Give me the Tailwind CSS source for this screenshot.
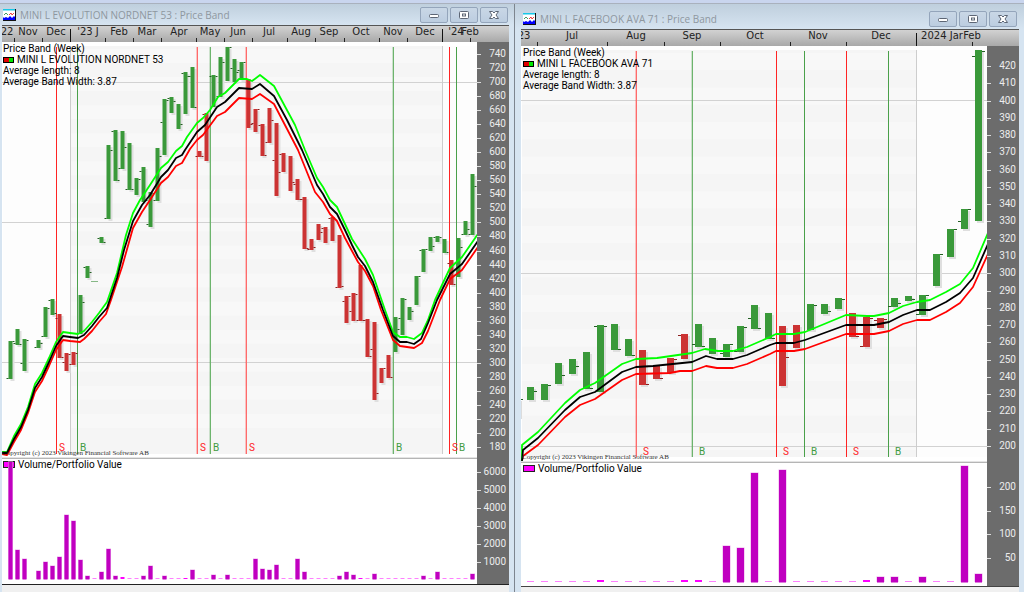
<!DOCTYPE html>
<html lang="en">
<head>
<meta charset="utf-8">
<title>Price Band</title>
<script src="https://cdn.jsdelivr.net/npm/@tailwindcss/browser@4"></script>
</head>
<body class="flex min-h-screen flex-col bg-[#d6e4f1] font-[Roboto,sans-serif] text-[10px] text-black">
<div class="h-1 border-b border-[#a9b1bd] bg-[#c9d5ee]"></div>
<main class="grid flex-1 grid-cols-[515fr_509fr]">

  <section class="flex min-w-0 flex-col border-r border-[#7d858f] bg-[#d6e4f1] pr-[5px] pl-[2px]" data-chart="left">
    <header class="-mr-[5px] -ml-[2px] flex h-[21px] items-center bg-linear-to-b from-[#bfcfdd] to-[#d6e4f1] pr-[6px] pl-[3px]">
      <svg class="h-3 w-[13px] shrink-0" viewBox="0 0 13 12"><rect width="13" height="12" fill="#111"/><rect x="0" y="0" width="12" height="11" fill="#fff"/><rect width="12" height="1.500" fill="#18c8e8"/><path d="M1 6l2-2 2 2" fill="none" stroke="#15803d" stroke-width=".8"/><path d="M6 6l2-2 1 2 2-2" fill="none" stroke="#e11" stroke-width=".8"/><path d="M0 8l1 1 2-1 2 1 2-2 2 2 2-2 1 1v3H0z" fill="#00f"/></svg>
      <h1 class="ml-1 flex-1 truncate font-['Open_Sans',sans-serif] text-[10px] leading-4 text-[#8e979f]">MINI L EVOLUTION NORDNET 53 : Price Band</h1>
      <div class="flex gap-[2px]" data-buttons></div>
    </header>
    <div class="relative h-[17px] overflow-hidden border-t border-[#555] bg-linear-to-b from-[#d2d2d2] to-[#a9a9a9] font-['DejaVu_Sans',sans-serif] text-[10px] leading-3 text-[#222]" data-months></div>
    <div class="flex">
      <div class="min-w-0 flex-1 bg-white">
        <div class="relative h-[415px] overflow-hidden" data-price>
          <div class="absolute top-0 left-[1px] pt-px leading-[11px] whitespace-nowrap">
            <p>Price Band (Week)</p>
            <p class="flex items-center gap-[3px]"><span class="flex h-[6px] w-[11px] border border-black"><i class="flex-1 bg-[#e00000]"></i><i class="flex-1 bg-[#00e800]"></i></span>MINI L EVOLUTION NORDNET 53</p>
            <p>Average length: 8</p>
            <p>Average Band Width: 3.87</p>
          </div>
          <p class="absolute bottom-0 left-0 font-['Liberation_Serif',serif] text-[7px] leading-2 whitespace-nowrap text-[#333]">Copyright (c) 2023 Vikingen Financial Software AB</p>
        </div>
        <div class="h-[2px] border-t border-[#e4e4e4] bg-[#b5b5b5]"></div>
        <div class="relative h-[125px] overflow-hidden" data-volume>
          <p class="absolute top-0 left-[1px] flex items-center gap-[3px] leading-[11px] whitespace-nowrap"><span class="h-[7px] w-3 border border-[#222] bg-[#f0f]"></span>Volume/Portfolio Value</p>
        </div>
      </div>
      <aside class="relative w-8 bg-[#6c6c6c] leading-3 text-[#ececec]" data-axis></aside>
    </div>
    <footer class="flex-1 border-t border-[#222] bg-[#f0f0f0]"></footer>
  </section>

  <section class="flex min-w-0 flex-col bg-[#d6e4f1] pr-[5px] pl-[6px]" data-chart="right">
    <header class="-mr-[5px] -ml-[6px] flex h-[25px] items-center bg-linear-to-b from-[#bfcfdd] to-[#d6e4f1] pt-[4px] pr-[7px] pl-2">
      <svg class="h-3 w-[13px] shrink-0" viewBox="0 0 13 12"><rect width="13" height="12" fill="#111"/><rect x="0" y="0" width="12" height="11" fill="#fff"/><rect width="12" height="1.500" fill="#18c8e8"/><path d="M1 6l2-2 2 2" fill="none" stroke="#15803d" stroke-width=".8"/><path d="M6 6l2-2 1 2 2-2" fill="none" stroke="#e11" stroke-width=".8"/><path d="M0 8l1 1 2-1 2 1 2-2 2 2 2-2 1 1v3H0z" fill="#00f"/></svg>
      <h1 class="ml-1 flex-1 truncate font-['Open_Sans',sans-serif] text-[10px] leading-4 text-[#8e979f]">MINI L FACEBOOK AVA 71 : Price Band</h1>
      <div class="flex gap-[2px]" data-buttons></div>
    </header>
    <div class="relative h-[17px] overflow-hidden border-t border-[#555] bg-linear-to-b from-[#d2d2d2] to-[#a9a9a9] font-['DejaVu_Sans',sans-serif] text-[10px] leading-3 text-[#222]" data-months></div>
    <div class="flex">
      <div class="min-w-0 flex-1 bg-white">
        <div class="relative h-[415px] overflow-hidden" data-price>
          <div class="absolute top-0 left-[2px] pt-px leading-[11px] whitespace-nowrap">
            <p>Price Band (Week)</p>
            <p class="flex items-center gap-[3px]"><span class="flex h-[6px] w-[11px] border border-black"><i class="flex-1 bg-[#e00000]"></i><i class="flex-1 bg-[#00e800]"></i></span>MINI L FACEBOOK AVA 71</p>
            <p>Average length: 8</p>
            <p>Average Band Width: 3.87</p>
          </div>
          <p class="absolute bottom-0 left-px font-['Liberation_Serif',serif] text-[7px] leading-2 whitespace-nowrap text-[#333]">Copyright (c) 2023 Vikingen Financial Software AB</p>
        </div>
        <div class="h-[2px] border-t border-[#e4e4e4] bg-[#b5b5b5]"></div>
        <div class="relative h-[123px] overflow-hidden" data-volume>
          <p class="absolute top-0 left-[2px] flex items-center gap-[3px] leading-[11px] whitespace-nowrap"><span class="h-[7px] w-3 border border-[#222] bg-[#f0f]"></span>Volume/Portfolio Value</p>
        </div>
      </div>
      <aside class="relative w-8 bg-[#6c6c6c] leading-3 text-[#ececec]" data-axis></aside>
    </div>
    <footer class="flex-1 border-t border-[#444] bg-[#f0f0f0]"></footer>
  </section>
</main>

<script>
// Bars: [slot, high, low, open tick, close tick, falling]; 0 leaves a tick out.
const charts = {
  left: {
    x0: 2, w: 475, y0: 42, h: 415, vy0: 459, vh: 125, first: 10.5, step: 7, bw: 4, tick: 2, base: 579.5,
    yFrom: 47, yTo: 454, years: [70.5, 442.5], grid: [82, 222, 362],
    months: [['22', 7], ['Nov', 28], ['Dec', 56], ["'23 J", 88], ['Feb', 119], ['Mar', 147], ['Apr', 179], ['May', 210], ['Jun', 238], ['Jul', 269], ['Aug', 301], ['Sep', 329], ['Oct', 361], ['Nov', 393], ['Dec', 425], ["'24", 456], ['Feb', 470]],
    marks: [14, 42, 105, 133, 161, 196, 224, 252, 287, 315, 344, 379, 407, 470], tall: [70, 442],
    signals: [['S', 56.5], ['B', 77.5], ['S', 197, 1], ['B', 210.5, 1], ['S', 246, 1], ['B', 393.5, 1], ['S', 449.5], ['B', 456.5]],
    scale: [740, 180, 20, 54, 447], vscale: [6000, 1000, 1000, 472, 562],
    bars: [[0,341,379,379,341],[1,329,345,343,344],[2,339,371,363,340],[4,340,348,348,343],[5,307,337,337,308],[6,299,315,300,313],[7,314,358,318,357,1],[8,353,371,362,354,1],[9,352,365,364,353,1],[10,295,334,333,302],[11,266,278,267,272],[13,237,243,238,242],[14,145,219,219,150],[15,130,181,131,180],[16,131,169,168,147],[17,143,190,190,190],[18,178,195,0,179],[19,167,202,171,200],[20,192,227,224,193],[21,148,201,201,156],[22,99,155,122,100],[23,97,113,98,101],[24,104,129,0,124],[25,72,114,73,76],[26,67,108,76,108],[27,151,157,156,156,1],[28,113,161,114,0,1],[29,75,107,76,76],[30,57,97,97,62],[31,47,81,0,47],[32,59,82,68,72],[33,62,80,70,62],[34,79,128,0,124,1],[35,109,132,123,109,1],[36,124,156,125,155,1],[37,108,143,142,120,1],[38,123,196,160,172,1],[39,153,172,154,0,1],[40,156,191,0,182,1],[41,179,200,184,199,1],[42,197,249,199,249,1],[43,239,250,249,247,1],[44,224,240,0,232,1],[45,227,243,228,0,1],[46,217,241,218,0,1],[47,235,288,287,286,1],[48,296,323,301,296,1],[49,293,321,311,294,1],[50,265,321,320,320,1],[51,319,357,320,356,1],[52,322,400,349,393,1],[53,368,383,0,368,1],[54,355,378,0,377,1],[55,317,352,0,329],[56,298,335,318,299],[57,307,320,0,311],[58,276,305,0,276],[59,249,272,250,249],[60,237,251,0,246],[61,236,242,237,237],[62,239,253,0,253],[63,260,285,263,284,1],[64,238,277,0,247],[65,221,235,234,229],[66,174,235,234,186]],
    dash: [95, 281],
    green: '1,452 7,452 14,436 21,424 28,407 35,384 42,373 49,358 56,342 63,332 70,333 78,334 84,331 92,322 99,313 107,302 117,273 126,235 133,213 140,200 150,185 161,168 168,162 176,151 182,146 187,137 197,123 203,118 210,110 218,97 225,93 239,79 247,79 252,81 260,75 274,86 295,125 305,150 317,178 323,187 330,200 337,207 352,239 365,259 373,275 385,310 393,332 400,337 407,337 414,339 422,333 428,320 435,300 442,285 450,268 462,257 478,234',
    black: '1,453 7,453 14,439 21,427 28,410 35,388 42,377 49,362 56,346 63,336 70,337 78,338 84,335 92,326 99,317 107,308 117,278 124,250 133,221 142,205 150,195 161,177 168,170 176,158 182,155 185,150 197,132 205,125 217,107 225,102 239,88 252,89 260,84 274,96 287,120 302,150 317,185 323,194 330,207 337,214 345,230 352,245 358,257 365,266 373,282 383,310 393,336 400,342 407,342 414,344 421,339 428,323 437,300 442,290 450,274 462,264 478,241',
    red: '1,454 7,455 14,442 21,430 28,413 35,392 42,381 49,366 56,350 63,340 70,341 80,342 84,339 92,331 99,322 106,314 111,300 122,267 133,228 142,212 150,200 161,183 168,177 176,166 182,163 190,149 197,140 203,135 217,116 225,112 239,98 252,99 260,94 274,104 298,150 315,192 323,202 330,214 337,221 345,238 352,251 358,262 365,271 373,286 381,310 393,340 400,346 407,347 414,348 422,343 428,331 440,300 450,279 462,270 478,247',
    vol: [117,29,20,null,8,17,13,22,64,58,19,3,0,7,30,3,2,0,0,3,13,0,3,0,0,1,9,0,0,4,0,4,0,0,0,20,10,9,14,0,0,20,7,0,0,0,0,3,7,4,1,0,5,0,0,0,0,0,0,3,0,7,0,0,0,0,5]
  },
  right: {
    x0: 521, w: 466, y0: 46, h: 415, vy0: 463, vh: 123, first: 530.5, step: 14, bw: 7, tick: 3, base: 582.5,
    yFrom: 51, yTo: 457, years: [916.5], grid: [100.5, 273, 446],
    months: [['23', 524], ['Jul', 572], ['Aug', 636], ['Sep', 692], ['Oct', 755], ['Nov', 818], ['Dec', 881], ['2024 Jar', 942], ['Feb', 972]],
    marks: [537, 607, 664, 720, 790, 846, 972], tall: [916],
    signals: [['S', 636, 1], ['B', 692, 1], ['S', 776.5], ['B', 804.5], ['S', 846.5], ['B', 888.5]],
    scale: [420, 200, 10, 66, 446], vscale: [200, 50, 50, 487, 558],
    bars: [[0,387,400,0,391],[1,384,400,0,385],[2,363,384,0,375],[3,359,374,0,366],[4,352,389,0,389],[5,325,392,326,326],[6,324,350,0,349],[7,339,356,0,355],[8,350,385,0,384,1],[9,366,379,0,379,1],[10,358,373,0,359,1],[11,334,359,335,0,1],[12,324,347,344,346],[13,338,354,0,350],[14,344,357,353,344],[15,326,352,351,327],[16,305,329,318,329],[17,313,339,0,338],[18,326,386,0,357,1],[19,325,348,0,0,1],[20,304,330,0,305],[21,304,314,0,311],[22,298,309,0,299],[23,313,337,0,336,1],[24,317,347,346,318,1],[25,318,328,320,319,1],[26,298,307,306,303],[27,296,301,0,299],[28,295,315,315,295],[29,254,286,0,254],[30,229,257,0,229],[31,209,229,221,209],[32,50,221,56,51]],
    dash: null,
    green: '522,461 522,445 538,432 565,403 580,390 595,383 622,364 636,359 657,358 692,353 705,349 718,351 733,351 747,347 770,337 776,334 794,334 805,332 846,315 867,316 874,316 889,313 903,306 917,302 930,300 946,292 960,284 973,268 988,233',
    black: '522,461 523,450 538,438 565,410 580,397 595,392 622,372 636,367 653,366 692,362 706,356 717,359 733,359 747,355 770,345 776,343 794,343 805,340 846,325 874,325 889,322 903,315 917,310 930,310 946,302 960,293 973,278 988,244',
    red: '522,461 523,456 538,445 565,417 580,405 595,399 622,380 636,374 670,373 680,371 692,371 706,366 717,368 733,368 747,364 770,354 776,351 794,351 805,349 846,334 874,334 889,331 903,324 917,320 930,320 946,312 960,303 973,287 988,254',
    vol: [0,0,0,0,0,2,0,0,0,0,0,2,2,0,36,34,109,0,112,0,0,0,0,0,2,5,5,0,5,0,0,116,8]
  }
};

const rect = (x, y, w, h, fill) => `<rect x="${x}" y="${y}" width="${w}" height="${h}" fill="${fill}"/>`;
const barX = (c, k) => c.first + k * c.step - c.bw / 2;

function priceSvg(c) {
  const top = c.yFrom - 1, span = c.yTo - top;
  const y1 = c.years.length > 1 ? c.years[0] : c.x0 + 1, y2 = c.years[c.years.length - 1];
  let s = rect(c.x0 + 1, top, c.w, span, '#fdfdfd') + rect(y1, top, y2 - y1, span, '#f5f5f5');
  const bandH = (c.scale[4] - c.scale[3]) / ((c.scale[0] - c.scale[1]) / c.scale[2]);
  for (let y = top + 3; y < c.yTo - bandH; y += bandH * 2) s += rect(c.x0 + 1, y, c.w, bandH, 'rgba(255,255,255,.3)');
  c.grid.forEach(y => s += rect(c.x0, Math.floor(y), c.w, 1, '#d2d2d2'));
  c.years.forEach(x => s += rect(x - .5, top, 1, span, '#cdcdcd'));
  c.bars.forEach(([k, hi, lo]) => { s += rect(barX(c, k) + 2, hi + 2, c.bw, lo - hi, '#dfdfdf'); });
  c.signals.forEach(([t, x, soft]) => {
    const col = t === 'S' ? '#ff2424' : '#4aa04a', px = Math.floor(x);
    s += soft
      ? rect(px, c.yFrom, 1, span - 1, t === 'S' ? '#ff6a6a' : '#6db46d') + rect(px - 1, c.yFrom, 1, span - 1, t === 'S' ? '#ff242440' : '#4aa04a40')
      : rect(px, c.yFrom, 1, span - 1, col);
  });
  c.bars.forEach(([k, hi, lo, o, cl, red]) => {
    const x = barX(c, k), dark = red ? '#8c2020' : '#246024', col = red ? '#cc3333' : '#3a993a';
    s += rect(x, hi, c.bw, Math.max(1, lo - hi), col);
    if (o) s += rect(x - c.tick, Math.min(o, lo - 1), c.tick, 1, dark);
    if (cl) s += rect(x + c.bw, Math.min(cl, lo - 1), c.tick, 1, dark);
  });
  if (c.dash) s += rect(c.dash[0] - 4, c.dash[1], 7, 1, '#86b886');
  else s += rect(521, 399, 2, 1, '#246024') + rect(521, 401, 1, 18, '#dcdcdc');
  s += `<g fill="none" stroke-width="1.800" stroke-linejoin="round"><polyline points="${c.red}" stroke="#ff0000"/><polyline points="${c.green}" stroke="#00ff00"/><polyline points="${c.black}" stroke="#000"/></g>`;
  return `<svg class="block h-full w-full" preserveAspectRatio="none" viewBox="${c.x0} ${c.y0} ${c.w} ${c.h}">${s}</svg>`;
}

function volumeSvg(c) {
  let s = '';
  c.vol.forEach((v, k) => {
    if (v === null) return;
    const x = barX(c, k), b = Math.floor(c.base);
    if (v < 1) s += rect(x, b - 1, c.bw, 1, '#ff80ff');
    else if (v < 3) s += rect(x, b - v, c.bw, v, '#f0f');
    else s += rect(x - .5, b - v - .5, c.bw + 1, v + .5, '#ecaaec') + rect(x, b - v, c.bw, v + .5, '#c000c0');
  });
  return `<svg class="absolute inset-0 block h-full w-full" preserveAspectRatio="none" viewBox="${c.x0} ${c.vy0} ${c.w} ${c.vh}">${s}</svg>`;
}

const buttonIcons = [
  ['Minimize', '<rect x="6.500" y="5.500" width="9" height="3" rx="1" fill="#fff" stroke="#5d6675"/>'],
  ['Restore', '<rect x="6.500" y="2.500" width="9" height="7" rx="1" fill="#fff" stroke="#5d6675"/><rect x="9.500" y="5" width="3" height="2" fill="#fff" stroke="#5d6675"/>'],
  ['Close', '<path d="M6.500 2.500h3l1.500 1.500 1.500-1.500h3l-2.500 3.500 2.500 3.500h-3l-1.500-1.500-1.500 1.500h-3l2.500-3.500z" fill="#fff" stroke="#5d6675"/>']
];

document.querySelectorAll('[data-chart]').forEach(win => {
  const c = charts[win.dataset.chart], q = n => win.querySelector(`[data-${n}]`), pct = x => (x - c.x0) / c.w * 100;
  q('buttons').innerHTML = buttonIcons.map(([n, i]) => `<button type="button" aria-label="${n}" class="flex h-4 w-7 items-center justify-center rounded-[2px] border border-[#94a5bb] bg-linear-to-b from-[#c9d7e6] to-[#bccde0]"><svg class="h-3 w-[22px] shrink-0" viewBox="0 0 22 12">${i}</svg></button>`).join('');
  const inner = document.createElement('div');
  inner.className = 'relative mr-8 h-full';
  inner.innerHTML = c.months.map(([t, x]) => `<span class="absolute top-0 -translate-x-1/2 whitespace-nowrap" style="left:${pct(x)}%">${t}</span>`).join('')
    + c.marks.map(x => `<i class="absolute bottom-0 h-1 w-px bg-[#222]" style="left:${pct(x)}%"></i>`).join('')
    + c.tall.map(x => `<i class="absolute bottom-0 h-[13px] w-px bg-[#111]" style="left:${pct(x)}%"></i>`).join('');
  q('months').append(inner);
  q('price').insertAdjacentHTML('afterbegin', priceSvg(c));
  q('price').insertAdjacentHTML('beforeend', c.signals.map(([t, x]) => `<span class="${t === 'S' ? 'absolute bottom-[3px] -translate-x-1/2 leading-3 text-[#f22]' : 'absolute bottom-[3px] -translate-x-1/2 leading-3 text-[#3f9b3f]'}" style="left:${pct(Math.floor(x) + (c.step > 7 ? 10 : 6))}%">${t}</span>`).join(''));
  q('volume').insertAdjacentHTML('beforeend', volumeSvg(c));
  let a = '';
  [c.scale, c.vscale].forEach(([hi, lo, d, ya, yb]) => {
    for (let v = hi; v >= lo; v -= d) {
      const y = Math.round(ya + (hi - v) / (hi - lo) * (yb - ya)) - c.y0;
      a += `<div class="absolute inset-x-0 flex h-3 -translate-y-1/2 items-center justify-between pr-[3px]" style="top:${y}px"><i class="h-px w-1 bg-[#ddd]"></i><span>${v}</span></div>`;
    }
  });
  q('axis').innerHTML = a;
});
</script>
</body>
</html>
